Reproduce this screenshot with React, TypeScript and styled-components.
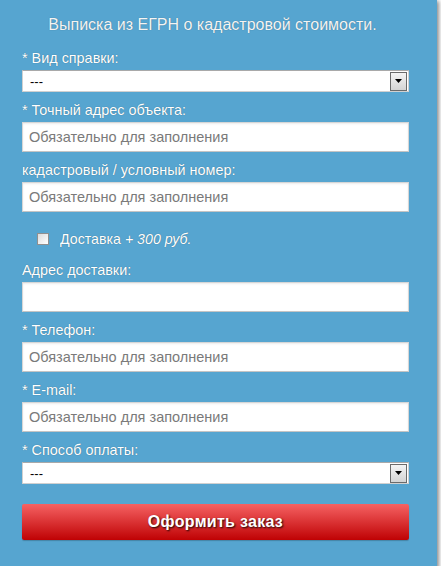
import styled, { createGlobalStyle } from "styled-components";

const GlobalStyle = createGlobalStyle`
  body {
    margin: 0;
    background: #ffffff;
    font-family: "Liberation Sans", Arial, sans-serif;
  }
`;

const Panel = styled.form`
  width: 437px;
  box-sizing: border-box;
  background-color: #56a5d0;
  padding: 15px 28px 26px 22px;
  box-shadow: 1px 2px 4px 1px rgba(0, 0, 0, 0.45);
  display: flex;
  flex-direction: column;
`;

const Title = styled.h2`
  margin: 0 0 15px 0;
  padding-right: 6px;
  font-size: 16px;
  line-height: 20px;
  font-weight: normal;
  text-align: center;
  color: #f4f4f4;
  text-shadow: 0 0 1px rgba(0, 0, 0, 0.35);
`;

const Field = styled.div`
  display: flex;
  flex-direction: column;
  gap: 4px;
  margin-bottom: 10px;
`;

const Label = styled.label`
  font-size: 14.4px;
  line-height: 16px;
  color: #ffffff;
  text-shadow: 0 0 1px rgba(0, 0, 0, 0.4);
`;

const TextInput = styled.input`
  box-sizing: border-box;
  width: 387px;
  height: 30px;
  margin: 0;
  padding: 0 6px;
  border: 1px solid #d6d6d6;
  border-bottom-color: #c4c4c4;
  box-shadow: inset 0 1px 2px rgba(0, 0, 0, 0.08);
  background: #ffffff;
  font-family: "Liberation Sans", Arial, sans-serif;
  font-size: 14.5px;
  color: #333;
  outline: none;

  &::placeholder {
    color: #7a7a7a;
  }
`;

const SelectBox = styled.div`
  box-sizing: border-box;
  width: 387px;
  height: 22px;
  display: flex;
  align-items: center;
  justify-content: space-between;
  background: #ffffff;
  border: 1px solid #d0d0d0;
  border-top-color: #a9a9a9;
  padding: 0 1px 0 7px;
  font-size: 13px;
  color: #000;
`;

const ArrowButton = styled.span`
  box-sizing: border-box;
  width: 17px;
  height: 19px;
  display: flex;
  align-items: center;
  justify-content: center;
  border: 1px solid #6b6b6b;
  background: linear-gradient(#f4f4f4, #d4d4d4);
`;

const CheckRow = styled.div`
  display: flex;
  align-items: center;
  height: 30px;
  padding: 4px 0 0 15px;
  box-sizing: border-box;
  margin-bottom: 10px;
  gap: 11px;
`;

const CheckBox = styled.input`
  appearance: none;
  margin: 0;
  width: 12px;
  height: 12px;
  box-sizing: border-box;
  border: 1px solid #8f8f8f;
  background: linear-gradient(135deg, #dcdcdc, #ffffff);
`;

const CheckLabel = styled.label`
  font-size: 14.2px;
  line-height: 16px;
  color: #ffffff;
  text-shadow: 0 0 1px rgba(0, 0, 0, 0.4);

  em {
    font-style: italic;
  }
`;

const SubmitButton = styled.button`
  margin-top: 10px;
  width: 387px;
  height: 36px;
  border: none;
  border-radius: 2px;
  background: linear-gradient(#f56263, #bf0204);
  color: #ffffff;
  font-family: "Liberation Sans", Arial, sans-serif;
  font-size: 16px;
  font-weight: bold;
  letter-spacing: 0.3px;
  text-shadow: 1px 1px 2px rgba(0, 0, 0, 0.9);
  box-shadow: 0 1px 1px rgba(0, 0, 0, 0.2);
  cursor: pointer;
`;

const Select = ({ value }: { value: string }) => (
  <SelectBox>
    <span>{value}</span>
    <ArrowButton>
      <svg width="7" height="4" viewBox="0 0 7 4">
        <path d="M0 0h7L3.5 4z" fill="#000" />
      </svg>
    </ArrowButton>
  </SelectBox>
);

const placeholder = "Обязательно для заполнения";

export default function App() {
  return (
    <>
      <GlobalStyle />
      <Panel onSubmit={(e) => e.preventDefault()}>
        <Title>Выписка из ЕГРН о кадастровой стоимости.</Title>
        <Field>
          <Label>* Вид справки:</Label>
          <Select value="---" />
        </Field>
        <Field>
          <Label>* Точный адрес объекта:</Label>
          <TextInput placeholder={placeholder} />
        </Field>
        <Field>
          <Label>кадастровый / условный номер:</Label>
          <TextInput placeholder={placeholder} />
        </Field>
        <CheckRow>
          <CheckBox type="checkbox" id="delivery" />
          <CheckLabel htmlFor="delivery">
            Доставка <em>+ 300 руб.</em>
          </CheckLabel>
        </CheckRow>
        <Field>
          <Label>Адрес доставки:</Label>
          <TextInput />
        </Field>
        <Field>
          <Label>* Телефон:</Label>
          <TextInput placeholder={placeholder} />
        </Field>
        <Field>
          <Label>* E-mail:</Label>
          <TextInput placeholder={placeholder} />
        </Field>
        <Field>
          <Label>* Способ оплаты:</Label>
          <Select value="---" />
        </Field>
        <SubmitButton type="submit">Оформить заказ</SubmitButton>
      </Panel>
    </>
  );
}
